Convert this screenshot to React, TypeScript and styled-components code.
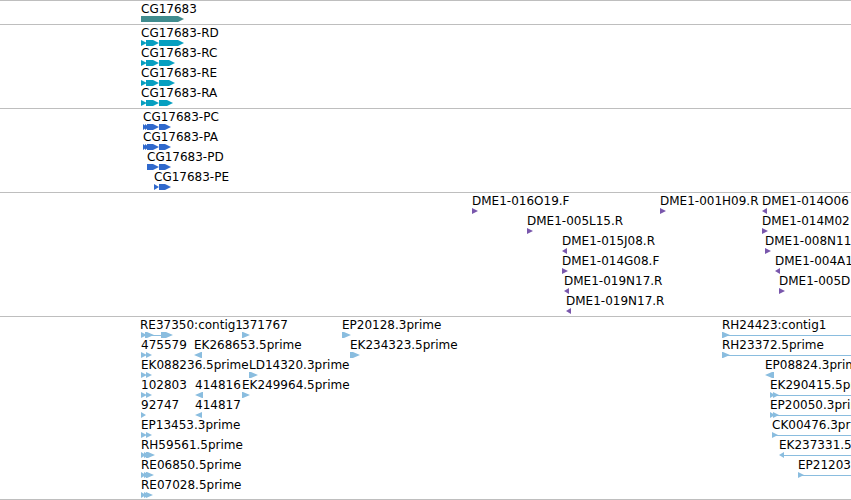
import React from "react";
import styled, { createGlobalStyle } from "styled-components";

const GlobalStyle = createGlobalStyle`
  body {
    margin: 0;
    background: #ffffff;
  }
`;

const Browser = styled.main`
  display: flex;
  flex-direction: column;
  width: 100%;
  overflow: hidden;
  font-family: "DejaVu Sans", sans-serif;
  font-size: 12px;
  line-height: 14px;
  color: #000000;
  border-bottom: 1px solid #bebebe;
`;

const Track = styled.section`
  display: flex;
  flex-direction: column;
  border-top: 1px solid #bebebe;
  padding: 1px 0 2px;

  &:last-child {
    padding-bottom: 1px;
  }
`;

const Lane = styled.div`
  position: relative;
  height: 20px;
`;

const FeatureBox = styled.div<{ $start: number }>`
  position: absolute;
  left: ${({ $start }) => $start}px;
  display: flex;
  flex-direction: column;
  white-space: nowrap;
`;

const Glyph = styled.svg<{ $color: string }>`
  display: block;
  overflow: visible;
  fill: ${({ $color }) => $color};
  stroke: none;
`;

type Shape = "arrow" | "triangle" | "dart";

interface Feature {
  name: string;
  start: number;
  exons: [number, number][];
  reverse?: boolean;
  lineTo?: number;
}

interface TrackData {
  id: string;
  color: string;
  shape: Shape;
  lanes: Feature[][];
}

/* Introns that leave the visible region run on well past its right edge. */
const OPEN_END = 1600;

const HEAD_LENGTH: Record<Shape, number> = { arrow: 6, triangle: 6, dart: 7 };

const f = (name: string, start: number, ...exons: [number, number][]): Feature => ({
  name,
  start,
  exons,
});
const rev = (feature: Feature): Feature => ({ ...feature, reverse: true });
const open = (feature: Feature): Feature => ({ ...feature, lineTo: OPEN_END });

const tracks: TrackData[] = [
  {
    id: "gene",
    color: "#408c8e",
    shape: "arrow",
    lanes: [[f("CG17683", 141, [0, 43])]],
  },
  {
    id: "transcript",
    color: "#069fc0",
    shape: "arrow",
    lanes: [
      [f("CG17683-RD", 141, [0, 6], [5, 18], [18, 43])],
      [f("CG17683-RC", 141, [0, 6], [5, 18], [18, 34])],
      [f("CG17683-RE", 141, [0, 6], [5, 18], [18, 34])],
      [f("CG17683-RA", 141, [0, 6], [5, 18], [18, 32])],
    ],
  },
  {
    id: "protein",
    color: "#3069cd",
    shape: "arrow",
    lanes: [
      [f("CG17683-PC", 143, [0, 4], [2, 6], [4, 16], [16, 28])],
      [f("CG17683-PA", 143, [0, 4], [2, 6], [4, 16], [16, 28])],
      [f("CG17683-PD", 147, [0, 12], [12, 24])],
      [f("CG17683-PE", 154, [0, 5], [5, 17])],
    ],
  },
  {
    id: "bac-end",
    color: "#7957ac",
    shape: "triangle",
    lanes: [
      [
        f("DME1-016O19.F", 472, [0, 6]),
        f("DME1-001H09.R", 660, [0, 6]),
        rev(f("DME1-014O06", 762, [0, 5])),
      ],
      [f("DME1-005L15.R", 527, [0, 6]), f("DME1-014M02", 762, [0, 6])],
      [rev(f("DME1-015J08.R", 562, [0, 5])), f("DME1-008N11", 765, [0, 6])],
      [f("DME1-014G08.F", 562, [0, 6]), rev(f("DME1-004A1", 775, [0, 5]))],
      [rev(f("DME1-019N17.R", 564, [0, 5])), f("DME1-005D", 779, [0, 6])],
      [rev(f("DME1-019N17.R", 566, [0, 5]))],
    ],
  },
  {
    id: "est",
    color: "#8abddf",
    shape: "dart",
    lanes: [
      [
        { ...f("RE37350:contig1", 140, [1, 7], [5, 14], [21, 33]), lineTo: 30 },
        f("371767", 242, [0, 8]),
        f("EP20128.3prime", 342, [0, 9]),
        open(f("RH24423:contig1", 722, [0, 8])),
      ],
      [
        f("475579", 141, [0, 6], [5, 11]),
        rev(f("EK268653.5prime", 194, [0, 8])),
        f("EK234323.5prime", 350, [0, 10]),
        open(f("RH23372.5prime", 722, [0, 8])),
      ],
      [
        f("EK088236.5prime", 141, [0, 6], [5, 11]),
        f("LD14320.3prime", 249, [0, 9]),
        rev(f("EP08824.3prime", 765, [0, 9])),
      ],
      [
        f("102803", 141, [0, 6], [5, 11]),
        rev(f("414816", 195, [0, 8])),
        f("EK249964.5prime", 242, [0, 8]),
        open(f("EK290415.5prime", 770, [0, 5], [3, 9])),
      ],
      [
        f("92747", 141, [0, 5]),
        rev(f("414817", 195, [0, 7])),
        open(f("EP20050.3prime", 770, [0, 5], [3, 9])),
      ],
      [
        f("EP13453.3prime", 141, [0, 6], [5, 11]),
        open(f("CK00476.3prime", 772, [0, 6])),
      ],
      [
        f("RH59561.5prime", 141, [0, 5], [3, 9], [5, 14]),
        rev(open(f("EK237331.5prime", 779, [0, 5]))),
      ],
      [
        f("RE06850.5prime", 141, [0, 5], [3, 9], [5, 13]),
        open(f("EP21203", 798, [0, 6])),
      ],
      [f("RE07028.5prime", 141, [0, 5], [3, 9], [5, 12])],
    ],
  },
];

/* Outline of one exon: a flat body whose rounded head narrows to its tip. */
function exonPoints([from, to]: [number, number], shape: Shape, reverse?: boolean) {
  const width = to - from;
  const head = Math.min(width, HEAD_LENGTH[shape]);
  const shoulder = width - head / 3;
  const profile: [number, number][] =
    shape === "triangle"
      ? [[0, 0], [width, 3], [0, 6]]
      : [
          [0, 0],
          [width - head, 0],
          [shoulder, 2],
          [width, 3],
          [shoulder, 4],
          [width - head, 6],
          [0, 6],
        ];
  return profile
    .map(([x, y]) => `${reverse ? to - x : from + x},${y}`)
    .join(" ");
}

function FeatureItem({
  feature,
  color,
  shape,
}: {
  feature: Feature;
  color: string;
  shape: Shape;
}) {
  const { name, start, exons, reverse, lineTo } = feature;
  const width = lineTo ?? exons[exons.length - 1][1];
  return (
    <FeatureBox $start={start}>
      <span>{name}</span>
      <Glyph $color={color} width={width} height={6} aria-hidden="true">
        {lineTo !== undefined && <rect x={3} y={3} width={lineTo - 3} height={1} />}
        {exons.map((exon) => (
          <polygon key={exon[0]} points={exonPoints(exon, shape, reverse)} />
        ))}
      </Glyph>
    </FeatureBox>
  );
}

export default function App() {
  return (
    <>
      <GlobalStyle />
      <Browser>
        {tracks.map(({ id, color, shape, lanes }) => (
          <Track key={id}>
            {lanes.map((lane, index) => (
              <Lane key={index}>
                {lane.map((feature) => (
                  <FeatureItem
                    key={feature.start}
                    feature={feature}
                    color={color}
                    shape={shape}
                  />
                ))}
              </Lane>
            ))}
          </Track>
        ))}
      </Browser>
    </>
  );
}
